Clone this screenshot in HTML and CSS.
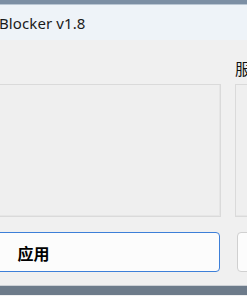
FILE: index.html
```html
<!DOCTYPE html>
<html lang="zh">
<head>
  <meta charset="UTF-8">
  <meta name="viewport" content="width=device-width, initial-scale=1.0">
  <title>Blocker v1.8</title>
  <link rel="stylesheet" href="styles.css">
</head>
<body>
  <div class="frame-top"></div>
  <div class="window">
    <div class="titlebar">
      <span class="title">Blocker v1.8</span>
    </div>
    <div class="client">
      <div class="panel">
        <div class="label"></div>
        <div class="box"></div>
        <button class="btn btn-primary">应用</button>
      </div>
      <div class="panel panel-side">
        <div class="label">服</div>
        <div class="box"></div>
        <button class="btn"></button>
      </div>
    </div>
  </div>
  <div class="frame-bottom"></div>
</body>
</html>
```

FILE: styles.css
```css
html, body {
  margin: 0;
  overflow: hidden;
}
body {
  width: 247px;
  height: 296px;
  background-color: #f0f0f0;
  font-family: "Noto Sans", "Open Sans", sans-serif;
  color: #1a1a1a;
}

.frame-top {
  height: 4px;
  background-color: #7c8fa4;
  border-bottom: 1px solid #b9c6d3;
}

.window {
  margin-left: -153px;
  width: 800px;
}

.titlebar {
  height: 35px;
  background-color: #eef3f8;
  display: flex;
  align-items: center;
  padding-left: 152px;
}
.title {
  font-size: 15px;
  letter-spacing: 0.1px;
}

.client {
  display: grid;
  grid-template-columns: 374px 200px;
  column-gap: 14px;
  height: 246px;
  border-bottom: 1px solid #cdd1d6;
  box-sizing: border-box;
}

.panel {
  display: flex;
  flex-direction: column;
}

.label {
  height: 44px;
  box-sizing: border-box;
  padding-top: 18px;
  font-family: "Noto Sans CJK SC", sans-serif;
  font-size: 16px;
  line-height: 20px;
  color: #111;
}

.box {
  height: 133px;
  box-sizing: border-box;
  border: 1px solid #dadada;
  box-shadow: inset -1px -1px 0 #e6e6e6;
  background-color: #efefef;
}

.btn {
  margin-top: 15px;
  height: 40px;
  margin-right: 1px;
  border: 1px solid #d0d0d0;
  border-radius: 4px;
  background-color: #fcfcfc;
  font-family: "Noto Sans CJK SC", sans-serif;
  font-size: 16px;
  font-weight: 700;
  color: #000;
  padding: 2px 0 0;
}
.btn-primary {
  border-color: #3d7fd8;
}
.panel-side .btn {
  margin-left: 2px;
}

.frame-bottom {
  height: 9px;
  background-color: #6d7b8a;
}
```
